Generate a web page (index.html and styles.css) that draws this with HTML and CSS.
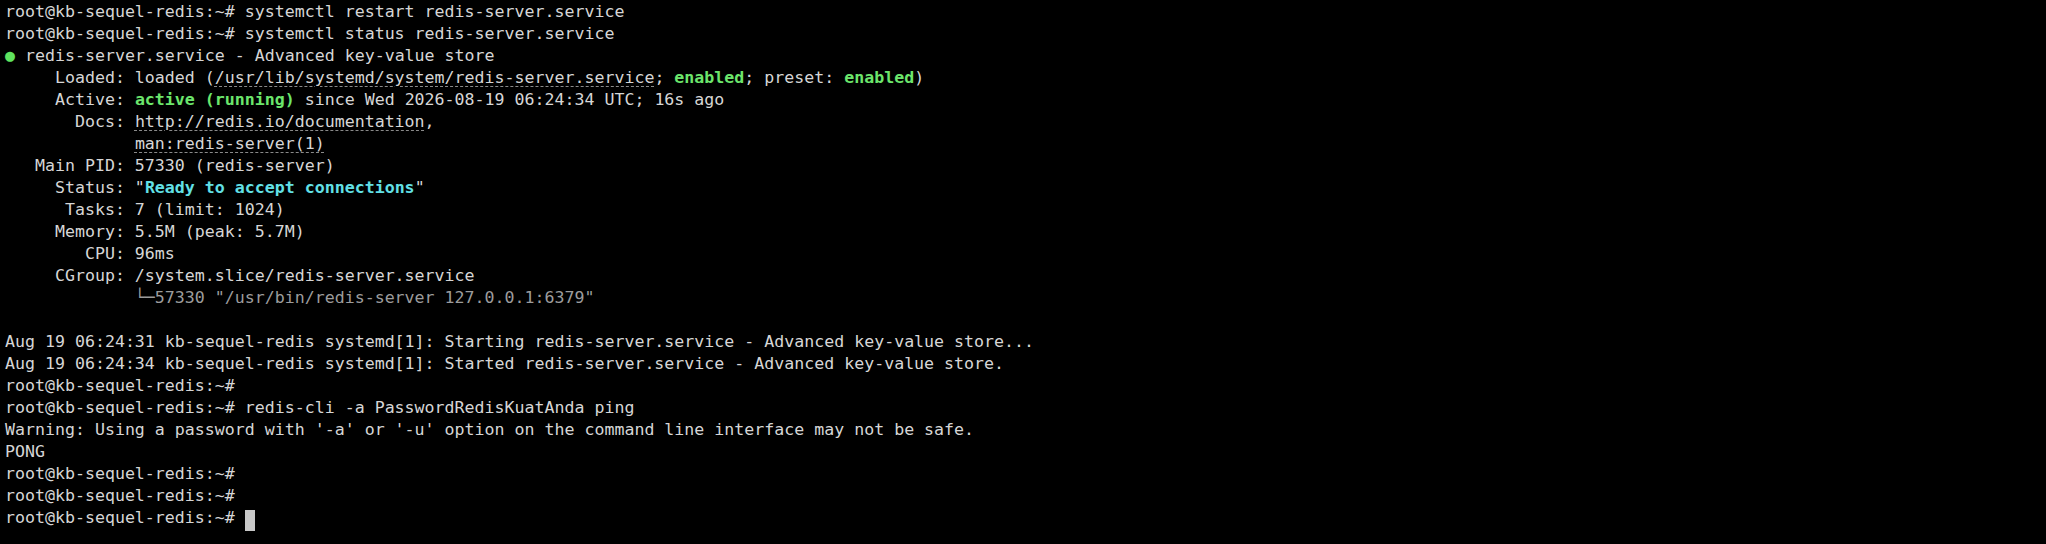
FILE: index.html
```html
<!DOCTYPE html>
<html>
<head>
<meta charset="utf-8">
<link rel="stylesheet" href="styles.css">
</head>
<body>
<pre class="term">root@kb-sequel-redis:~# systemctl restart redis-server.service
root@kb-sequel-redis:~# systemctl status redis-server.service
<span class="g">●</span> redis-server.service - Advanced key-value store
     Loaded: loaded (<span class="u">/usr/lib/systemd/system/redis-server.service</span>; <span class="gb">enabled</span>; preset: <span class="gb">enabled</span>)
     Active: <span class="gb">active (running)</span> since Wed 2026-08-19 06:24:34 UTC; 16s ago
       Docs: <span class="u">http://redis.io/documentation</span>,
             <span class="u">man:redis-server(1)</span>
   Main PID: 57330 (redis-server)
     Status: "<span class="cb">Ready to accept connections</span>"
      Tasks: 7 (limit: 1024)
     Memory: 5.5M (peak: 5.7M)
        CPU: 96ms
     CGroup: /system.slice/redis-server.service
             <span class="dim">└─57330 "/usr/bin/redis-server 127.0.0.1:6379"</span>

Aug 19 06:24:31 kb-sequel-redis systemd[1]: Starting redis-server.service - Advanced key-value store...
Aug 19 06:24:34 kb-sequel-redis systemd[1]: Started redis-server.service - Advanced key-value store.
root@kb-sequel-redis:~#
root@kb-sequel-redis:~# redis-cli -a PasswordRedisKuatAnda ping
Warning: Using a password with '-a' or '-u' option on the command line interface may not be safe.
PONG
root@kb-sequel-redis:~#
root@kb-sequel-redis:~#
root@kb-sequel-redis:~# <span class="cursor"> </span></pre>
</body>
</html>
```

FILE: styles.css
```css
html, body {
  margin: 0;
  padding: 0;
  background: #000;
  height: 100%;
}
.term {
  margin: 0;
  padding: 1px 0 0 5px;
  font-family: "DejaVu Sans Mono", "Liberation Mono", monospace;
  font-size: 16.6px;
  line-height: 22px;
  color: #d6d6d6;
  white-space: pre;
}
.g { color: #5fe35f; }
.gb { color: #6ce66c; font-weight: bold; }
.cb { color: #62e0e6; font-weight: bold; }
.dim { color: #9c9c9c; }
.u {
  text-decoration: underline dashed #8a8a8a;
  text-decoration-thickness: 1px;
  text-underline-offset: 3px;
}
.cursor {
  display: inline-block;
  width: 10px;
  height: 21px;
  vertical-align: -3px;
  background: #c8c8c8;
}
```
